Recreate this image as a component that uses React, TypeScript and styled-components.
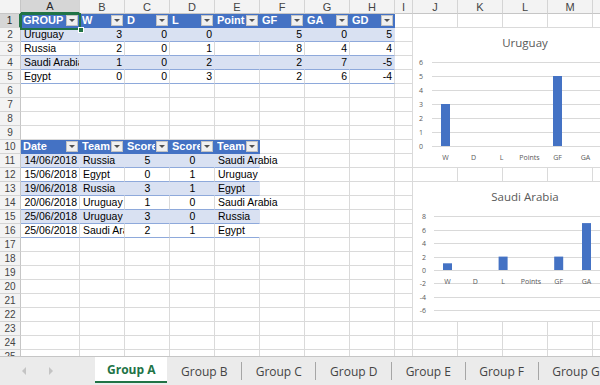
import React from 'react'
import styled, { createGlobalStyle, css } from 'styled-components'

const GlobalStyle = createGlobalStyle`
  html, body {
    margin: 0;
    padding: 0;
    background: #fff;
    overflow: hidden;
  }
  body {
    font-family: 'Liberation Sans', Arial, sans-serif;
  }
`

type Align = 'left' | 'right' | 'center'
type Kind = 'plain' | 'head' | 'band' | 'row'

interface CellDef {
  text: string
  align: Align
  kind: Kind
}

const COLS = ['A', 'B', 'C', 'D', 'E', 'F', 'G', 'H', 'I', 'J', 'K', 'L', 'M', 'N']
const WIDTHS = [59, 45, 45, 45, 45, 45, 45, 45, 18, 45, 45, 45, 45, 45]
const ROWS = Array.from({ length: 25 }, (_, i) => i + 1)

const GRID_LINE = '#dadada'
const TABLE_BLUE = '#4472c4'
const BAND = '#d9e1f2'
const TABLE_LINE = '#8ea9db'
const EXCEL_GREEN = '#217346'

const cells = new Map<string, CellDef>()
const key = (r: number, c: number) => `${r}:${c}`

function addTable(top: number, header: string[], rows: (string | number)[][], aligns: Align[]) {
  header.forEach((h, c) => cells.set(key(top, c), { text: h, align: 'left', kind: 'head' }))
  rows.forEach((row, i) =>
    row.forEach((v, c) =>
      cells.set(key(top + 1 + i, c), {
        text: String(v),
        align: aligns[c],
        kind: i % 2 === 0 ? 'band' : 'row',
      })
    )
  )
}

addTable(
  1,
  ['GROUP', 'W', 'D', 'L', 'Points', 'GF', 'GA', 'GD'],
  [
    ['Uruguay', 3, 0, 0, '', 5, 0, 5],
    ['Russia', 2, 0, 1, '', 8, 4, 4],
    ['Saudi Arabia', 1, 0, 2, '', 2, 7, -5],
    ['Egypt', 0, 0, 3, '', 2, 6, -4],
  ],
  ['left', 'right', 'right', 'right', 'right', 'right', 'right', 'right']
)

addTable(
  10,
  ['Date', 'Team', 'Score', 'Score', 'Team'],
  [
    ['14/06/2018', 'Russia', 5, 0, 'Saudi Arabia'],
    ['15/06/2018', 'Egypt', 0, 1, 'Uruguay'],
    ['19/06/2018', 'Russia', 3, 1, 'Egypt'],
    ['20/06/2018', 'Uruguay', 1, 0, 'Saudi Arabia'],
    ['25/06/2018', 'Uruguay', 3, 0, 'Russia'],
    ['25/06/2018', 'Saudi Arabia', 2, 1, 'Egypt'],
  ],
  ['right', 'left', 'center', 'center', 'left']
)

const CATEGORIES = ['W', 'D', 'L', 'Points', 'GF', 'GA', 'GD']

export default function App() {
  return (
    <>
      <GlobalStyle />
      <Window>
        <Sheet>
          <Grid>
            <Corner />
            {COLS.map((c, i) => (
              <ColHead key={c} $selected={i === 0}>
                {c}
              </ColHead>
            ))}
            {ROWS.map((r) => (
              <React.Fragment key={r}>
                <RowHead $selected={r === 1}>{r}</RowHead>
                {COLS.map((_, c) => renderCell(r, c))}
              </React.Fragment>
            ))}
          </Grid>

          <Selection>
            <FillHandle />
          </Selection>

          <ChartBox $top={28}>
            <BarChart
              title="Uruguay"
              values={[3, 0, 0, 0, 5, 0, 5]}
              min={0}
              max={6}
              step={1}
              unit={14}
              zeroY={118}
              labelX={10}
              gridX={19}
              catX={32.5}
              catStep={28}
            />
          </ChartBox>
          <ChartBox $top={182}>
            <BarChart
              title="Saudi Arabia"
              values={[1, 0, 2, 0, 2, 7, -5]}
              min={-6}
              max={8}
              step={2}
              unit={6.7}
              zeroY={88}
              labelX={13}
              gridX={21}
              catX={34.5}
              catStep={27.8}
            />
          </ChartBox>
        </Sheet>

        <TabBar>
          <Nav>
            <NavArrow $dir="left" />
            <NavArrow $dir="right" />
          </Nav>
          <Tab $active>Group A</Tab>
          {['Group B', 'Group C', 'Group D', 'Group E', 'Group F', 'Group G'].map((name, i) => (
            <React.Fragment key={name}>
              {i > 0 && <TabDivider />}
              <Tab>{name}</Tab>
            </React.Fragment>
          ))}
        </TabBar>
      </Window>
    </>
  )
}

function renderCell(r: number, c: number) {
  const def = cells.get(key(r, c))
  if (!def) return <Cell key={c} $kind="plain" $align="left" />
  if (def.kind === 'head') {
    return (
      <Cell key={c} $kind="head" $align="left">
        <HeadText>{def.text}</HeadText>
        <FilterButton />
      </Cell>
    )
  }
  const next = cells.get(key(r, c + 1))
  const spill = def.align === 'left' && (!next || next.text === '')
  return (
    <Cell key={c} $kind={def.kind} $align={def.align} $spill={spill}>
      {def.text}
    </Cell>
  )
}

type ChartProps = {
  title: string
  values: number[]
  min: number
  max: number
  step: number
  unit: number
  zeroY: number
  labelX: number
  gridX: number
  catX: number
  catStep: number
}

function BarChart({ title, values, min, max, step, unit, zeroY, labelX, gridX, catX, catStep }: ChartProps) {
  const ticks: number[] = []
  for (let v = max; v >= min; v -= step) ticks.push(v)
  return (
    <svg width="240" height="140" viewBox="0 0 240 140">
      <text x="112" y="19" textAnchor="middle" fontSize="11.5" fill="#595959" fontFamily="'Open Sans', sans-serif">
        {title}
      </text>
      {ticks.map((v) => {
        const y = Math.round(zeroY - v * unit) + 0.5
        return (
          <g key={v}>
            <line x1={gridX} x2="240" y1={y} y2={y} stroke="#d9d9d9" strokeWidth="1" />
            <text x={labelX} y={y + 2.5} textAnchor="end" fontSize="7" fill="#595959" fontFamily="'Open Sans', sans-serif">
              {v}
            </text>
          </g>
        )
      })}
      {values.map((v, i) => {
        if (v === 0) return null
        const cx = catX + catStep * i
        const h = Math.abs(v) * unit
        return <rect key={i} x={cx - 4.5} y={v > 0 ? zeroY - h : zeroY} width="9" height={h} fill={TABLE_BLUE} />
      })}
      {CATEGORIES.map((c, i) => (
        <text
          key={c}
          x={catX + catStep * i}
          y={zeroY + 13.5}
          textAnchor="middle"
          fontSize="7"
          fill="#595959"
          fontFamily="'Open Sans', sans-serif"
        >
          {c}
        </text>
      ))}
    </svg>
  )
}

const Window = styled.div`
  width: 600px;
  height: 385px;
  display: flex;
  flex-direction: column;
  overflow: hidden;
`

const Sheet = styled.div`
  position: relative;
  height: 356px;
  overflow: hidden;
  flex: none;
`

const Grid = styled.div`
  display: grid;
  grid-template-columns: 21px ${WIDTHS.map((w) => `${w}px`).join(' ')};
  grid-auto-rows: 14px;
  width: max-content;
`

const headBase = css`
  box-sizing: border-box;
  display: flex;
  align-items: center;
  justify-content: center;
  background: #f3f3f3;
  color: #444;
  white-space: nowrap;
`

const Corner = styled.div`
  ${headBase};
  border-right: 1px solid #c6c6c6;
  border-bottom: 1px solid #c6c6c6;
`

const ColHead = styled.div<{ $selected?: boolean }>`
  ${headBase};
  font-size: 11px;
  border-right: 1px solid #d4d4d4;
  border-bottom: 1px solid #c6c6c6;
  ${({ $selected }) =>
    $selected &&
    css`
      background: #d6d6d6;
      color: #262626;
      border-bottom: 2px solid ${EXCEL_GREEN};
    `}
`

const RowHead = styled.div<{ $selected?: boolean }>`
  ${headBase};
  font-size: 10px;
  border-right: 1px solid #c6c6c6;
  border-bottom: 1px solid #d4d4d4;
  ${({ $selected }) =>
    $selected &&
    css`
      background: #d6d6d6;
      color: #262626;
      border-right: 2px solid ${EXCEL_GREEN};
    `}
`

const kindStyles: Record<Kind, ReturnType<typeof css>> = {
  plain: css`
    background: transparent;
    border-right: 1px solid ${GRID_LINE};
    border-bottom: 1px solid ${GRID_LINE};
  `,
  head: css`
    background: ${TABLE_BLUE};
    color: #fff;
    font-weight: 700;
    font-size: 11px;
    border-right: 1px solid ${TABLE_BLUE};
    border-bottom: 1px solid ${TABLE_BLUE};
    padding: 0 1px 0 2px;
  `,
  band: css`
    background: ${BAND};
    border-right: 1px solid ${BAND};
    border-bottom: 1px solid ${TABLE_LINE};
  `,
  row: css`
    background: #fff;
    border-right: 1px solid ${GRID_LINE};
    border-bottom: 1px solid ${TABLE_LINE};
  `,
}

const Cell = styled.div<{ $kind: Kind; $align: Align; $spill?: boolean }>`
  box-sizing: border-box;
  display: flex;
  align-items: center;
  justify-content: ${({ $align }) => ($align === 'right' ? 'flex-end' : $align === 'center' ? 'center' : 'flex-start')};
  padding: 0 2px 0 3px;
  font-size: 10.5px;
  line-height: 13px;
  color: #000;
  white-space: nowrap;
  overflow: ${({ $spill }) => ($spill ? 'visible' : 'hidden')};
  position: relative;
  z-index: ${({ $spill }) => ($spill ? 1 : 0)};
  min-width: 0;
  ${({ $kind }) => kindStyles[$kind]};
  ${({ $spill }) =>
    $spill &&
    css`
      border-right-color: transparent;
    `}
`

const HeadText = styled.span`
  flex: 1;
  min-width: 0;
  overflow: hidden;
`

const FilterButton = styled.span`
  flex: none;
  width: 12px;
  height: 11px;
  box-sizing: border-box;
  margin-left: 1px;
  background: #f0f0f0;
  border: 1px solid #c3c3c3;
  display: flex;
  align-items: center;
  justify-content: center;

  &::after {
    content: '';
    border-left: 3px solid transparent;
    border-right: 3px solid transparent;
    border-top: 3px solid #505050;
  }
`

const Selection = styled.div`
  position: absolute;
  left: 20px;
  top: 13px;
  width: 61px;
  height: 17px;
  box-sizing: border-box;
  border: 2px solid ${EXCEL_GREEN};
  z-index: 3;
`

const FillHandle = styled.span`
  position: absolute;
  right: -5px;
  bottom: -5px;
  width: 6px;
  height: 6px;
  box-sizing: border-box;
  background: ${EXCEL_GREEN};
  border: 1px solid #fff;
`

const ChartBox = styled.div<{ $top: number }>`
  position: absolute;
  left: 413px;
  top: ${({ $top }) => $top}px;
  width: 240px;
  height: 139px;
  background: #fff;
  z-index: 2;

  svg {
    display: block;
  }
`

const TabBar = styled.div`
  flex: none;
  display: flex;
  align-items: stretch;
  height: 29px;
  box-sizing: border-box;
  background: #ebebeb;
  border-top: 1px solid #c6c6c6;
  font-family: 'Open Sans', sans-serif;
  font-size: 12px;
  color: #444;
  white-space: nowrap;
`

const Nav = styled.div`
  width: 95px;
  flex: none;
  display: flex;
  align-items: center;
  gap: 23px;
  padding-left: 22px;
  box-sizing: border-box;
`

const NavArrow = styled.span<{ $dir: 'left' | 'right' }>`
  width: 0;
  height: 0;
  border-top: 4px solid transparent;
  border-bottom: 4px solid transparent;
  ${({ $dir }) =>
    $dir === 'left'
      ? css`
          border-right: 4px solid #c4c4c4;
        `
      : css`
          border-left: 4px solid #c4c4c4;
        `}
`

const Tab = styled.div<{ $active?: boolean }>`
  flex: none;
  display: flex;
  align-items: center;
  padding: 0 13.6px;
  box-sizing: border-box;
  ${({ $active }) =>
    $active &&
    css`
      background: #fff;
      color: ${EXCEL_GREEN};
      font-weight: 700;
      padding: 0 12px;
      margin-bottom: 2px;
      border-bottom: 2px solid ${EXCEL_GREEN};
    `}
`

const TabDivider = styled.span`
  flex: none;
  align-self: center;
  width: 1px;
  height: 18px;
  background: #a6a6a6;
`
